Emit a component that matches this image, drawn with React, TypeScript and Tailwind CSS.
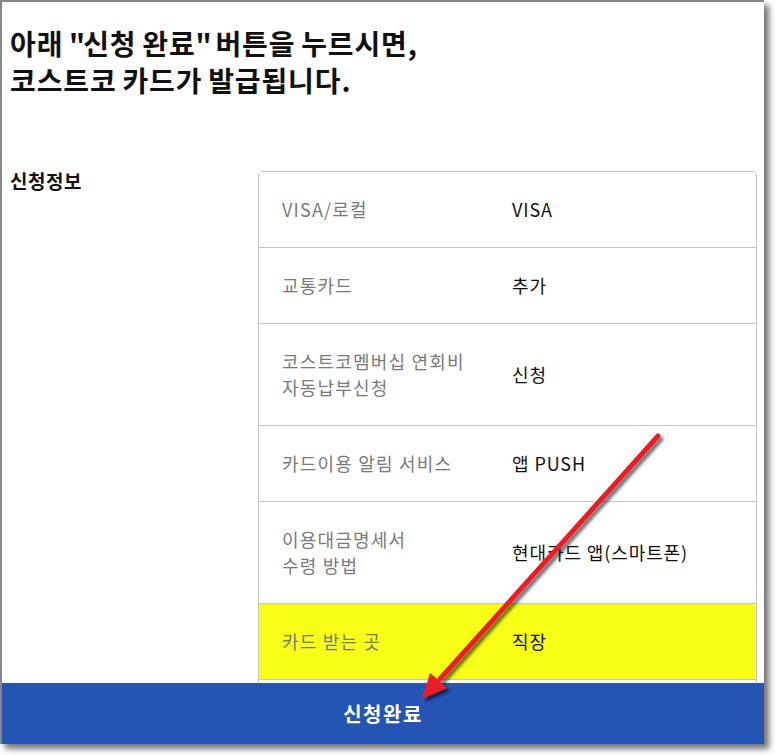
import React from "react";

const rows: { label: string[]; value: string; yellow?: boolean }[] = [
  { label: ["VISA/로컬"], value: "VISA" },
  { label: ["교통카드"], value: "추가" },
  { label: ["코스트코멤버십 연회비", "자동납부신청"], value: "신청" },
  { label: ["카드이용 알림 서비스"], value: "앱 PUSH" },
  { label: ["이용대금명세서", "수령 방법"], value: "현대카드 앱(스마트폰)" },
  { label: ["카드 받는 곳"], value: "직장", yellow: true },
  { label: ["카드 수령 주소"], value: "회사" },
];

export default function App() {
  return (
    <div
      className="w-[775px] h-[755px] bg-white overflow-hidden"
      style={{ fontFamily: '"Noto Sans CJK KR", "Noto Sans", sans-serif' }}
    >
      <div className="relative w-[764px] h-[744px] border-l-2 border-t-2 border-[#878787] bg-white shadow-[5px_5px_6px_rgba(0,0,0,0.55)] flex flex-col">
        <div className="flex-1 overflow-hidden">
          <h1 className="pt-[23px] pl-[8px] text-[28px] leading-[37px] font-bold text-[#111] tracking-[0.9px] [word-spacing:-1.5px]">
            아래 <span className="tracking-[-2px]">"</span>신청 완료<span className="tracking-[-2px]">"</span> 버튼을 누르시면<span className="tracking-[-2px]">,</span>
            <br />
            코스트코 카드가 발급됩니다.
          </h1>
          <div className="mt-[72px] flex pl-[8px] pr-[7px]">
            <div className="w-[248px] shrink-0 text-[19px] leading-[20px] font-bold text-[#111] tracking-[0.5px]">
              신청정보
            </div>
            <div className="flex-1 border border-[#c4c4c4] rounded-[5px] overflow-hidden">
              {rows.map((r, i) => (
                <div
                  key={i}
                  className={
                    "flex items-center pt-[24px] pb-[25px] text-[18px] leading-[26px] " +
                    (i > 0 ? "border-t border-[#c4c4c4] " : "") +
                    (r.yellow ? "bg-[#f7ff17]" : "bg-white")
                  }
                >
                  <div className="w-[253px] shrink-0 pl-[23px] text-[#7a7a7a] tracking-[1.2px]">
                    {r.label.map((l, j) => (
                      <div key={j}>{l}</div>
                    ))}
                  </div>
                  <div className="text-[#111] tracking-[0.9px]">{r.value}</div>
                </div>
              ))}
            </div>
          </div>
        </div>
        <div className="h-[61px] shrink-0 bg-[#2454b4] flex items-center justify-center text-white text-[20px] leading-[28px] font-bold tracking-[1.5px]">
          신청완료
        </div>
        <svg
          className="absolute left-0 top-0 pointer-events-none"
          width="764"
          height="744"
          viewBox="-2 -2 764 744"
        >
          <defs>
            <filter id="sh" x="-20%" y="-20%" width="140%" height="140%">
              <feDropShadow dx="3" dy="3" stdDeviation="1.6" floodColor="#000" floodOpacity="0.55" />
            </filter>
          </defs>
          <g filter="url(#sh)">
            <line x1="654" y1="432" x2="436" y2="675" stroke="#ec1f27" strokeWidth="5" strokeLinecap="round" />
            <polygon points="418,695 426,669 443,684" fill="#ec1f27" />
          </g>
        </svg>
      </div>
    </div>
  );
}
